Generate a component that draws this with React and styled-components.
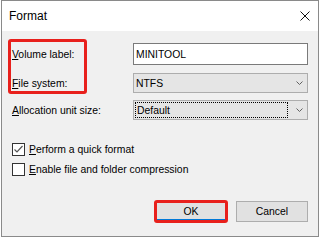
import React from 'react'
import styled, { createGlobalStyle } from 'styled-components'

const GlobalStyle = createGlobalStyle`
  html, body {
    margin: 0;
    background: #ffffff;
  }
  body {
    font-family: "Liberation Sans", Arial, sans-serif;
    font-size: 10.4px;
    color: #000;
  }
`

const Window = styled.div`
  box-sizing: border-box;
  width: 318px;
  height: 237px;
  margin-left: 1px;
  border: 1px solid #8a8a8a;
  background: #f0f0f0;
  display: flex;
  flex-direction: column;
`

const TitleBar = styled.div`
  height: 30px;
  background: #ffffff;
  display: flex;
  align-items: center;
  justify-content: space-between;
  padding: 0 8px 0 7px;
  font-size: 12px;
`

const Body = styled.div`
  display: flex;
  flex-direction: column;
  padding: 12px 10px 0 10px;
`

const FormGrid = styled.div`
  display: grid;
  grid-template-columns: 121px 175px;
  grid-template-rows: 23px 20px 20px;
  row-gap: 7px;
  align-items: center;
`

const Label = styled.div`
  grid-column: 1;
  grid-row: ${p => p.$row};
  white-space: nowrap;
`

const Highlight = styled.div`
  grid-column: 1;
  grid-row: 1 / 3;
  align-self: stretch;
  justify-self: start;
  width: 79px;
  margin: -4px 0 -1px -4px;
  box-sizing: border-box;
  border: 3px solid #e8201c;
  border-radius: 3px;
`

const TextInput = styled.div`
  grid-column: 2;
  grid-row: 1;
  align-self: start;
  box-sizing: border-box;
  height: 22px;
  background: #fff;
  border: 1px solid #7a7a7a;
  display: flex;
  align-items: center;
  padding-left: 2px;
`

const Select = styled.div`
  grid-column: 2;
  grid-row: ${p => p.$row};
  box-sizing: border-box;
  height: 20px;
  background: #e5e5e5;
  border: 1px solid #adadad;
  display: flex;
  align-items: stretch;
  padding: 1px 4px 1px ${p => (p.$focused ? '1px' : '2px')};
`

const SelectText = styled.div`
  flex: 1;
  display: flex;
  align-items: center;
  ${p => p.$focused && `
    border: 1px dotted #000;
    padding-left: 1px;
    margin-right: 8px;
  `}
`

const Chevron = styled.svg`
  width: 7px;
  height: 4px;
  align-self: center;
  flex: none;
`

const Checks = styled.div`
  display: flex;
  flex-direction: column;
  gap: 7px;
  margin-top: 23px;
`

const CheckRow = styled.div`
  display: flex;
  align-items: center;
  gap: 4px;
`

const Box = styled.div`
  box-sizing: border-box;
  width: 13px;
  height: 13px;
  background: #fff;
  border: 1px solid #333;
  display: flex;
  align-items: center;
  justify-content: center;
`

const Footer = styled.div`
  display: flex;
  justify-content: flex-end;
  gap: 9px;
  margin-top: 25px;
  padding-right: 0;
`

const ButtonWrap = styled.div`
  position: relative;
  ${p => p.$marked && `
    &::after {
      content: '';
      position: absolute;
      inset: -1px;
      border: 3px solid #e8201c;
      border-radius: 3px;
    }
  `}
`

const Button = styled.button`
  box-sizing: border-box;
  width: 72px;
  height: 21px;
  padding: 0;
  font-family: inherit;
  font-size: 10.4px;
  color: #000;
  background: #e1e1e1;
  border: 1px solid ${p => (p.$primary ? '#0078d7' : '#adadad')};
  box-shadow: ${p => (p.$primary ? 'inset 0 -2px #0078d7' : 'none')};
`

const ChevronDown = () => (
  <Chevron viewBox="0 0 7 4">
    <polyline points="0.5,0.5 3.5,3.5 6.5,0.5" fill="none" stroke="#606060" strokeWidth="1" />
  </Chevron>
)

function App() {
  return (
    <>
      <GlobalStyle />
      <Window>
        <TitleBar>
          <span>Format</span>
          <svg width="10" height="10" viewBox="0 0 10 10">
            <path d="M0.5 0.5 L9.5 9.5 M9.5 0.5 L0.5 9.5" stroke="#111" strokeWidth="1" />
          </svg>
        </TitleBar>
        <Body>
          <FormGrid>
            <Highlight />
            <Label $row={1}><u>V</u>olume label:</Label>
            <Label $row={2}><u>F</u>ile system:</Label>
            <Label $row={3}><u>A</u>llocation unit size:</Label>
            <TextInput>MINITOOL</TextInput>
            <Select $row={2}>
              <SelectText>NTFS</SelectText>
              <ChevronDown />
            </Select>
            <Select $row={3} $focused>
              <SelectText $focused>Default</SelectText>
              <ChevronDown />
            </Select>
          </FormGrid>
          <Checks>
            <CheckRow>
              <Box>
                <svg width="11" height="11" viewBox="0 0 11 11">
                  <polyline points="1.5,5.5 4,8 9.5,2" fill="none" stroke="#555" strokeWidth="1.2" />
                </svg>
              </Box>
              <span><u>P</u>erform a quick format</span>
            </CheckRow>
            <CheckRow>
              <Box />
              <span><u>E</u>nable file and folder compression</span>
            </CheckRow>
          </Checks>
          <Footer>
            <ButtonWrap $marked>
              <Button $primary>OK</Button>
            </ButtonWrap>
            <ButtonWrap>
              <Button>Cancel</Button>
            </ButtonWrap>
          </Footer>
        </Body>
      </Window>
    </>
  )
}

export default App
